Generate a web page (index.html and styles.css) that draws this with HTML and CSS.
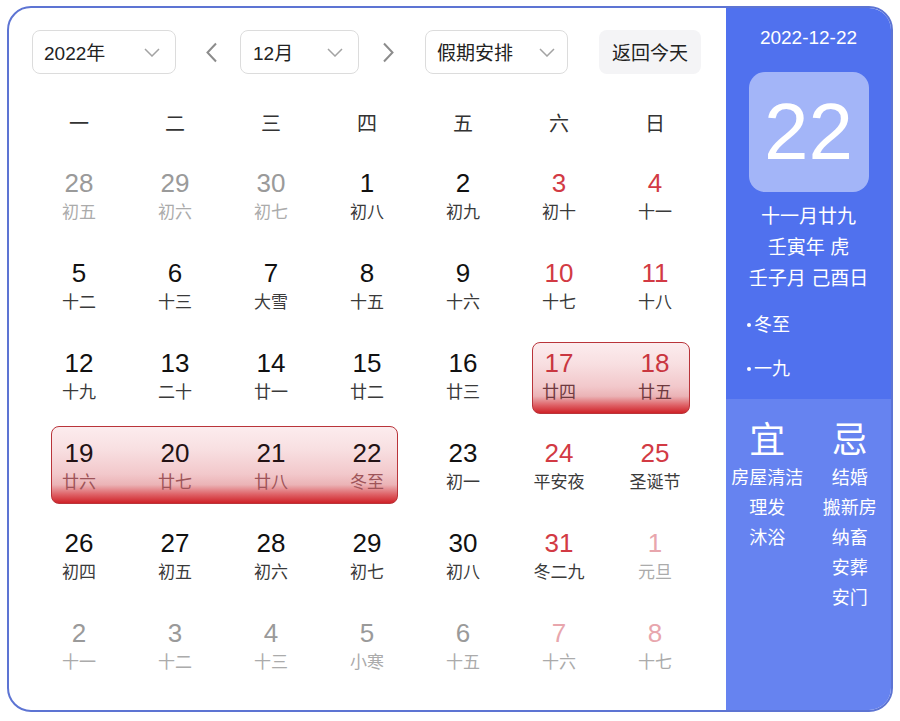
FILE: index.html
```html
<!DOCTYPE html>
<html lang="zh-CN">
<head>
<meta charset="utf-8">
<title>万年历</title>
<link rel="stylesheet" href="styles.css">
</head>
<body>
<div class="frame">
  <div class="main">
    <div class="toolbar">
      <div class="select sel-year"><span>2022年</span><svg class="chev" width="16" height="9" viewBox="0 0 16 9"><path d="M1 1l7 7 7-7" fill="none" stroke="#a3a3a3" stroke-width="1.5"/></svg></div>
      <button class="arrow arrow-prev"><svg width="13" height="21" viewBox="0 0 13 21"><path d="M11 1.5L2.5 10.5l8.5 9" fill="none" stroke="#8c8c8c" stroke-width="2"/></svg></button>
      <div class="select sel-month"><span>12月</span><svg class="chev" width="16" height="9" viewBox="0 0 16 9"><path d="M1 1l7 7 7-7" fill="none" stroke="#a3a3a3" stroke-width="1.5"/></svg></div>
      <button class="arrow arrow-next"><svg width="13" height="21" viewBox="0 0 13 21"><path d="M2 1.5l8.5 9-8.5 9" fill="none" stroke="#8c8c8c" stroke-width="2"/></svg></button>
      <div class="select sel-holiday"><span>假期安排</span><svg class="chev" width="16" height="9" viewBox="0 0 16 9"><path d="M1 1l7 7 7-7" fill="none" stroke="#a3a3a3" stroke-width="1.5"/></svg></div>
      <button class="today">返回今天</button>
    </div>

    <div class="weekdays">
      <div>一</div><div>二</div><div>三</div><div>四</div><div>五</div><div>六</div><div>日</div>
    </div>

    <div class="days">
      <div class="day other"><div class="num">28</div><div class="lunar">初五</div></div>
      <div class="day other"><div class="num">29</div><div class="lunar">初六</div></div>
      <div class="day other"><div class="num">30</div><div class="lunar">初七</div></div>
      <div class="day"><div class="num">1</div><div class="lunar">初八</div></div>
      <div class="day"><div class="num">2</div><div class="lunar">初九</div></div>
      <div class="day weekend"><div class="num">3</div><div class="lunar">初十</div></div>
      <div class="day weekend"><div class="num">4</div><div class="lunar">十一</div></div>

      <div class="day"><div class="num">5</div><div class="lunar">十二</div></div>
      <div class="day"><div class="num">6</div><div class="lunar">十三</div></div>
      <div class="day"><div class="num">7</div><div class="lunar">大雪</div></div>
      <div class="day"><div class="num">8</div><div class="lunar">十五</div></div>
      <div class="day"><div class="num">9</div><div class="lunar">十六</div></div>
      <div class="day weekend"><div class="num">10</div><div class="lunar">十七</div></div>
      <div class="day weekend"><div class="num">11</div><div class="lunar">十八</div></div>

      <div class="day"><div class="num">12</div><div class="lunar">十九</div></div>
      <div class="day"><div class="num">13</div><div class="lunar">二十</div></div>
      <div class="day"><div class="num">14</div><div class="lunar">廿一</div></div>
      <div class="day"><div class="num">15</div><div class="lunar">廿二</div></div>
      <div class="day"><div class="num">16</div><div class="lunar">廿三</div></div>
      <div class="holiday holiday-a">
        <div class="holiday-inner">
          <div class="day rest"><div class="num">17</div><div class="lunar">廿四</div></div>
          <div class="day rest"><div class="num">18</div><div class="lunar">廿五</div></div>
        </div>
      </div>

      <div class="holiday holiday-b">
        <div class="holiday-inner">
          <div class="day work"><div class="num">19</div><div class="lunar">廿六</div></div>
          <div class="day work"><div class="num">20</div><div class="lunar">廿七</div></div>
          <div class="day work"><div class="num">21</div><div class="lunar">廿八</div></div>
          <div class="day work"><div class="num">22</div><div class="lunar">冬至</div></div>
        </div>
      </div>
      <div class="day"><div class="num">23</div><div class="lunar">初一</div></div>
      <div class="day weekend"><div class="num">24</div><div class="lunar">平安夜</div></div>
      <div class="day weekend"><div class="num">25</div><div class="lunar">圣诞节</div></div>

      <div class="day"><div class="num">26</div><div class="lunar">初四</div></div>
      <div class="day"><div class="num">27</div><div class="lunar">初五</div></div>
      <div class="day"><div class="num">28</div><div class="lunar">初六</div></div>
      <div class="day"><div class="num">29</div><div class="lunar">初七</div></div>
      <div class="day"><div class="num">30</div><div class="lunar">初八</div></div>
      <div class="day weekend"><div class="num">31</div><div class="lunar">冬二九</div></div>
      <div class="day other other-weekend"><div class="num">1</div><div class="lunar">元旦</div></div>

      <div class="day other"><div class="num">2</div><div class="lunar">十一</div></div>
      <div class="day other"><div class="num">3</div><div class="lunar">十二</div></div>
      <div class="day other"><div class="num">4</div><div class="lunar">十三</div></div>
      <div class="day other"><div class="num">5</div><div class="lunar">小寒</div></div>
      <div class="day other"><div class="num">6</div><div class="lunar">十五</div></div>
      <div class="day other other-weekend"><div class="num">7</div><div class="lunar">十六</div></div>
      <div class="day other other-weekend"><div class="num">8</div><div class="lunar">十七</div></div>
    </div>
  </div>

  <aside class="side">
    <div class="side-top">
      <div class="side-date">2022-12-22</div>
      <div class="big-day">22</div>
      <div class="side-lunar">
        <div>十一月廿九</div>
        <div>壬寅年 虎</div>
        <div>壬子月 己酉日</div>
      </div>
      <ul class="terms">
        <li>冬至</li>
        <li>一九</li>
      </ul>
    </div>
    <div class="side-bottom">
      <div class="yj">
        <div class="yj-head">宜</div>
        <div>房屋清洁</div>
        <div>理发</div>
        <div>沐浴</div>
      </div>
      <div class="yj">
        <div class="yj-head">忌</div>
        <div>结婚</div>
        <div>搬新房</div>
        <div>纳畜</div>
        <div>安葬</div>
        <div>安门</div>
      </div>
    </div>
  </aside>
</div>
</body>
</html>
```

FILE: styles.css
```css
* { box-sizing: border-box; }

html, body {
  margin: 0;
  padding: 0;
  background: #ffffff;
}

body {
  font-family: "Liberation Sans", "Noto Sans CJK SC", sans-serif;
  color: #111;
}

.frame {
  margin: 6px 0 0 7px;
  width: 886px;
  height: 706px;
  border: 2px solid #5d74d3;
  border-radius: 24px;
  overflow: hidden;
  display: flex;
  background: #fff;
}

/* ---------- main calendar ---------- */
.main {
  width: 717px;
  flex: none;
  padding: 22px 0 0 22px;
}

.toolbar {
  display: flex;
  align-items: center;
  height: 44px;
  margin-left: 1px;
}

.select {
  height: 44px;
  border: 1px solid #dcdcdc;
  border-radius: 8px;
  display: flex;
  align-items: center;
  justify-content: space-between;
  padding: 0 15px 2px 11px;
  font-size: 19px;
  color: #222;
  flex: none;
}

.select .chev { flex: none; margin-top: 2px; }

.sel-year { width: 144px; }
.sel-month { width: 119px; margin-left: 17px; padding-left: 12px; }
.sel-holiday { width: 143px; margin-left: 25px; padding-left: 11px; padding-right: 12px; }

.arrow {
  width: 24px;
  height: 44px;
  padding: 0;
  border: 0;
  background: transparent;
  display: flex;
  align-items: center;
  justify-content: center;
  flex: none;
}

.arrow-prev { margin-left: 23px; }
.arrow-next { margin-left: 17px; }

.today {
  margin-left: 31px;
  width: 102px;
  height: 44px;
  border: 0;
  border-radius: 8px;
  background: #f4f4f6;
  font-family: inherit;
  font-size: 19px;
  color: #222;
  padding: 0 0 2px;
}

.weekdays {
  display: grid;
  grid-template-columns: repeat(7, 96px);
  margin-top: 30px;
  height: 40px;
  line-height: 40px;
  text-align: center;
  font-size: 20px;
  color: #333;
}

.days {
  display: grid;
  grid-template-columns: repeat(7, 96px);
  grid-auto-rows: 90px;
}

.day {
  text-align: center;
  padding-top: 24px;
}

.num {
  font-size: 26px;
  line-height: 30px;
  color: #111;
}

.lunar {
  font-size: 17px;
  line-height: 30px;
  color: #3a3a3a;
}

.day.weekend .num { color: #d23a44; }

.day.other .num { color: #9a9a9a; }
.day.other .lunar { color: #ababab; }
.day.other-weekend .num { color: #e8a6ad; }

/* ---------- holiday boxes ---------- */
.holiday {
  border: 1px solid #b9343a;
  border-radius: 8px;
  background: linear-gradient(to bottom,
    #fcecee 0%,
    #f8dfe1 30%,
    #f2c8cb 62%,
    #ebb3b6 76%,
    #de6065 89%,
    #cf2228 100%);
}

.holiday-a {
  grid-column: span 2;
  margin: 18px 13px 0 21px;
}

.holiday-b {
  grid-column: span 4;
  margin: 12px 17px 0 20px;
}

.holiday-inner {
  display: grid;
  grid-auto-flow: column;
  grid-auto-columns: 96px;
  height: 90px;
}

.holiday-a .holiday-inner { margin: -19px -14px 0 -22px; }
.holiday-b .holiday-inner { margin: -13px -18px 0 -21px; }

.day.rest .num { color: #c93640; }
.day.rest .lunar { color: #6f3a3f; }
.day.work .num { color: #231214; }
.day.work .lunar { color: #9e5459; }

/* ---------- side panel ---------- */
.side {
  width: 165px;
  flex: none;
  display: flex;
  flex-direction: column;
  color: #fff;
  text-align: center;
}

.side-top {
  height: 391px;
  flex: none;
  background: #5071ee;
  padding-top: 18px;
}

.side-date {
  font-size: 19px;
  line-height: 24px;
}

.big-day {
  width: 120px;
  height: 120px;
  margin: 22px auto 0;
  border-radius: 16px;
  background: #a3b5f8;
  font-size: 80px;
  line-height: 120px;
}

.side-lunar {
  margin-top: 9px;
  font-size: 19px;
  line-height: 31px;
}

.terms {
  list-style: none;
  margin: 16px 0 0;
  padding: 0 0 0 21px;
  text-align: left;
  font-size: 18px;
  line-height: 30px;
}

.terms li + li { margin-top: 14px; }

.terms li::before {
  content: "";
  display: inline-block;
  width: 4px;
  height: 4px;
  border-radius: 50%;
  background: #fff;
  vertical-align: middle;
  margin: 0 3px 3px 0;
}

.side-bottom {
  flex: 1;
  background: #6683f0;
  display: grid;
  grid-template-columns: 1fr 1fr;
  padding-top: 21px;
  align-items: start;
}

.yj {
  font-size: 18px;
  line-height: 30px;
  white-space: nowrap;
}

.yj-head {
  font-size: 36px;
  line-height: 42px;
  margin-bottom: 1px;
}
```
